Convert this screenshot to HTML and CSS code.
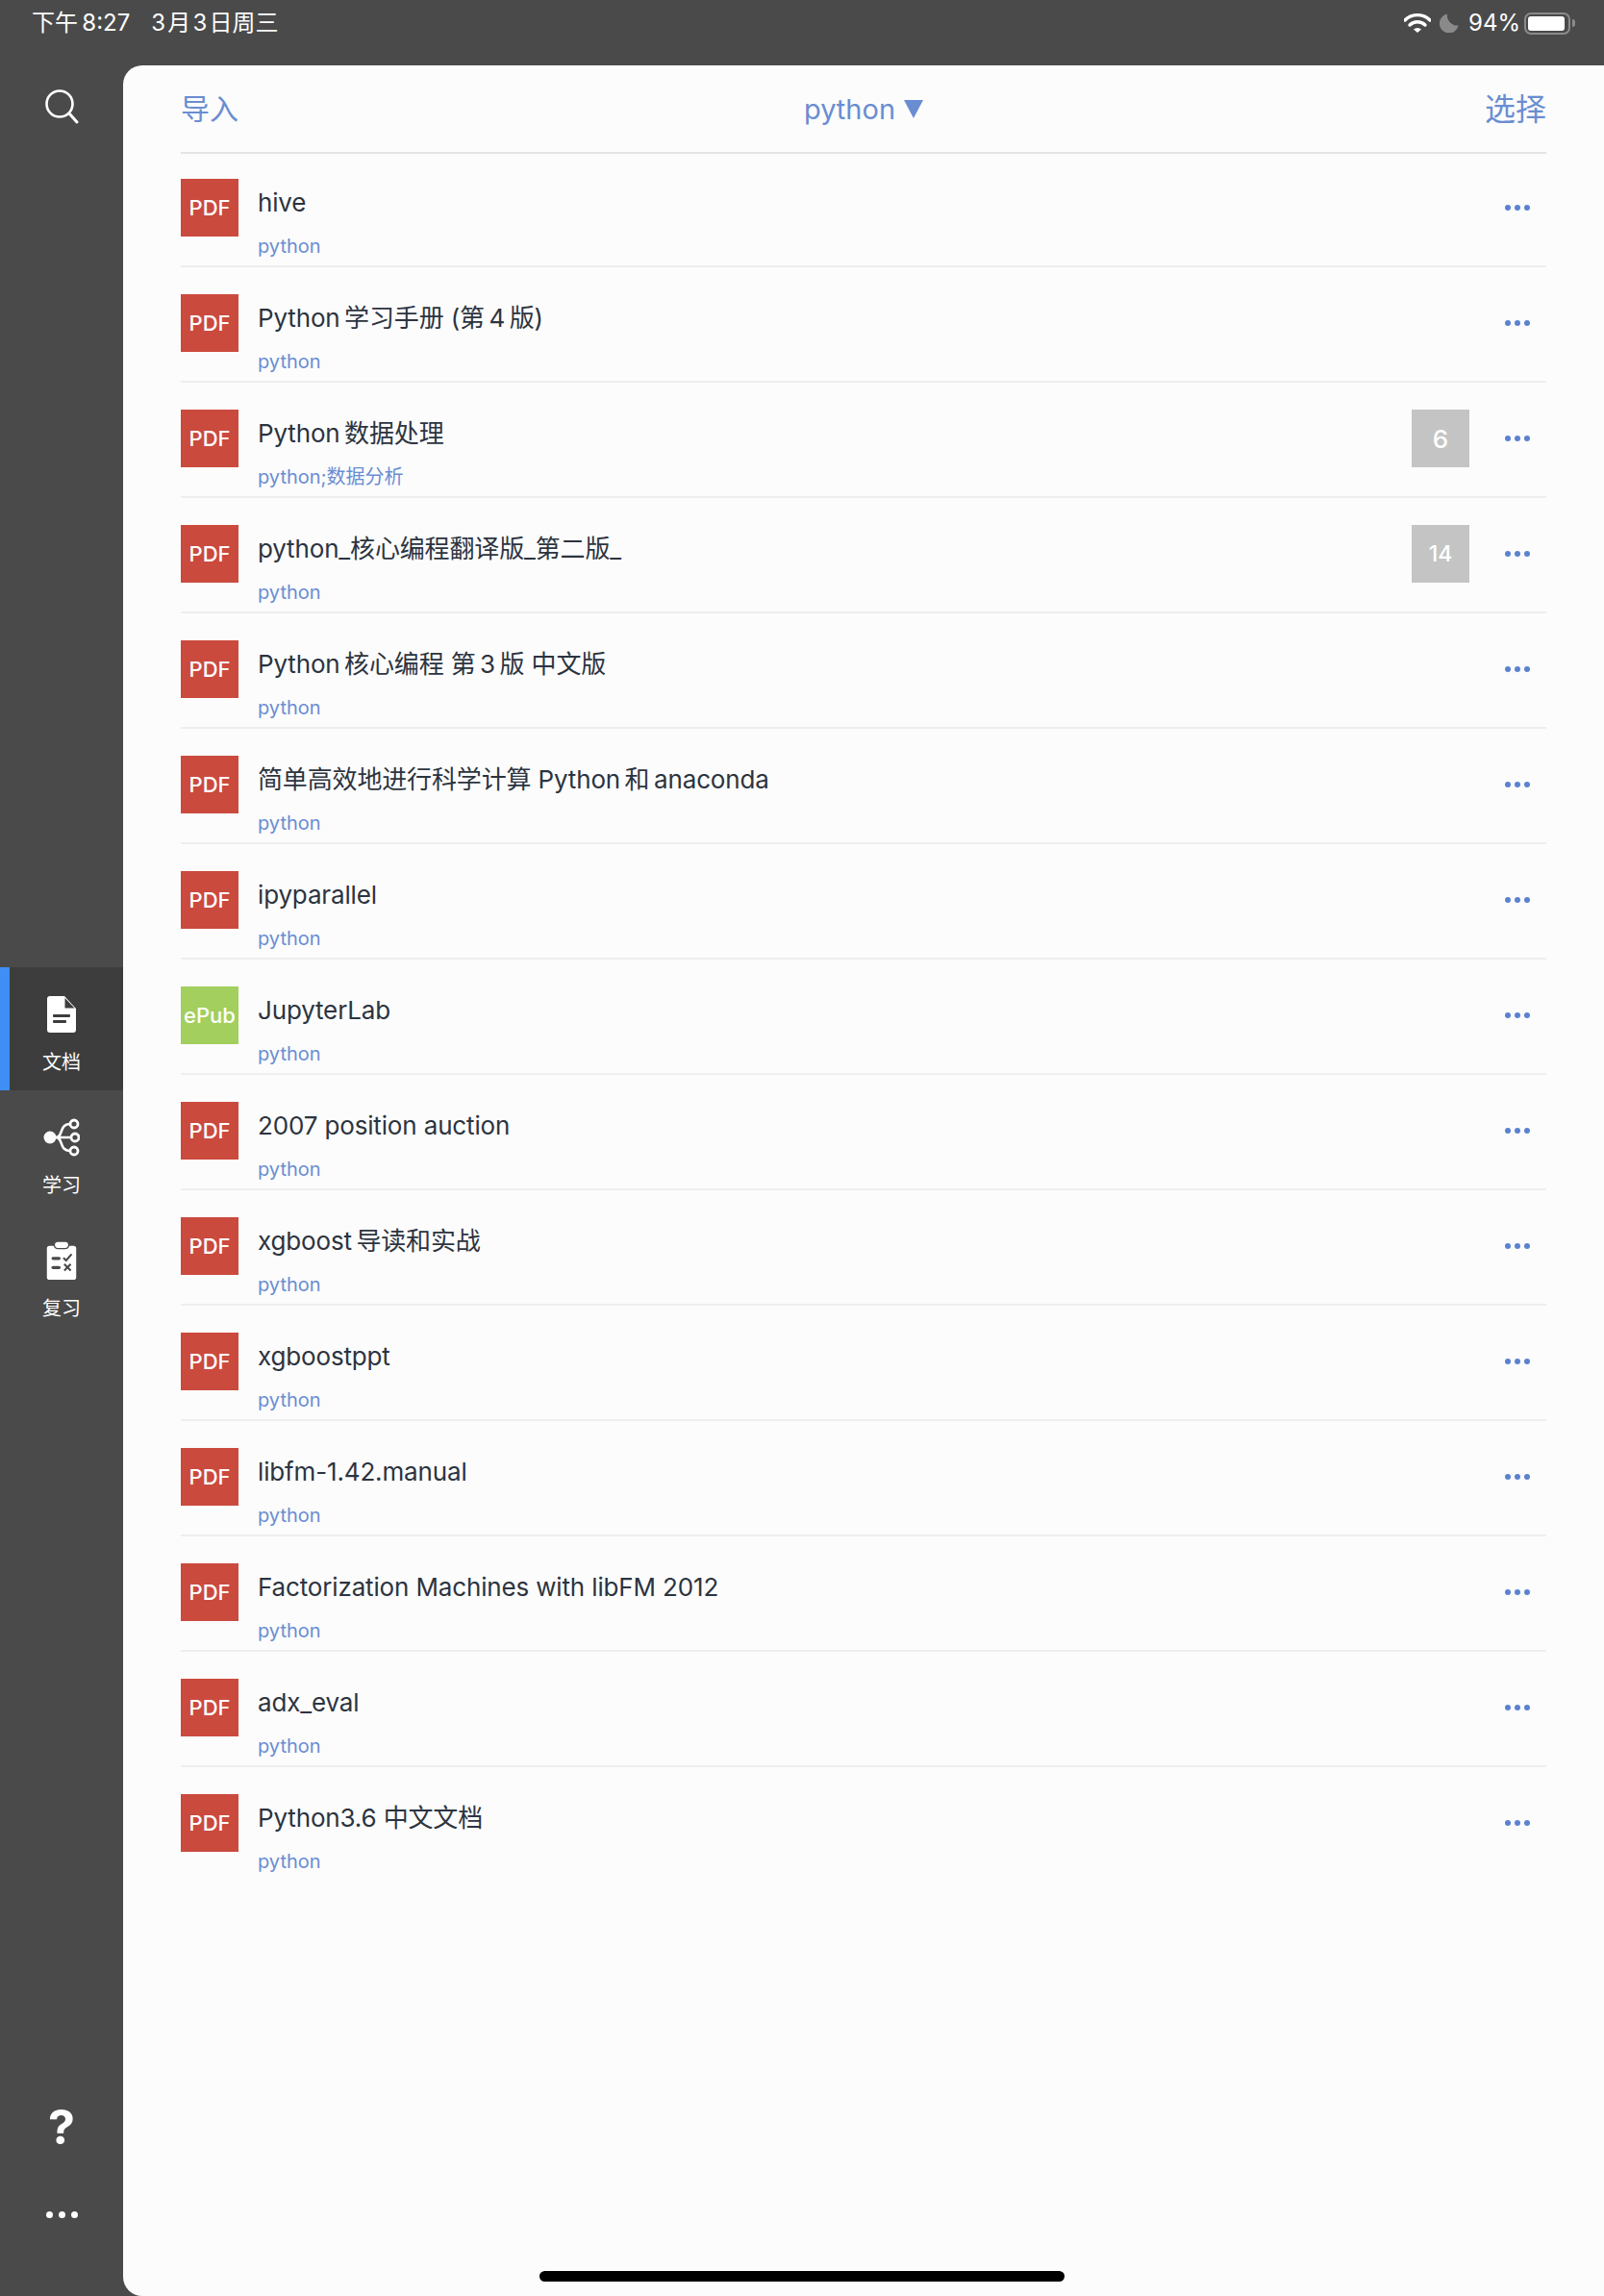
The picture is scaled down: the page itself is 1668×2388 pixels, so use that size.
FILE: index.html
```html
<!DOCTYPE html>
<html>
<head>
    <title>文档</title>
    <link rel="stylesheet" href="styles.css">
</head>
<body>
    <div id="app">
        <div class="status-bar">
            <div class="status-time">
                <span>下午&thinsp;8:27</span>
                <span>3&hairsp;月&hairsp;3&hairsp;日周三</span>
            </div>
            <div class="status-icons">
                <svg class="icon-wifi" width="28" height="20" viewBox="0 0 28 20">
                    <path d="M1 7 A18.5 18.5 0 0 1 27 7" fill="none" stroke="#fff" stroke-width="3.4" stroke-linecap="round"/>
                    <path d="M6 12 A11.5 11.5 0 0 1 22 12" fill="none" stroke="#fff" stroke-width="3.4" stroke-linecap="round"/>
                    <path d="M10 16.5 A6 6 0 0 1 18 16.5 L14 20 Z" fill="#fff"/>
                </svg>
                <svg class="icon-moon" width="20" height="20" viewBox="0 0 20 20">
                    <path d="M8 0.5 A10 10 0 1 0 19.6 12.5 A10.5 10.5 0 0 1 8 0.5 Z" fill="#8a8a8a"/>
                </svg>
                <span class="battery-text">94%</span>
                <div class="battery">
                    <div class="battery-fill"></div>
                </div>
                <div class="battery-nub"></div>
            </div>
        </div>

        <div class="sidebar">
            <button class="side-search">
                <svg width="36" height="36" viewBox="0 0 36 36">
                    <circle cx="16" cy="15" r="13.5" fill="none" stroke="#fff" stroke-width="2.6"/>
                    <path d="M26 25 L34 34" stroke="#fff" stroke-width="3" stroke-linecap="round"/>
                </svg>
            </button>

            <div class="side-nav">
                <div class="side-item active">
                    <svg width="30" height="38" viewBox="0 0 30 38">
                        <path d="M3 0 H18 L30 13 V35 A3 3 0 0 1 27 38 H3 A3 3 0 0 1 0 35 V3 A3 3 0 0 1 3 0 Z" fill="#fff"/>
                        <path d="M18.5 2 V12.5 H28.5 Z" fill="#3d3d3d"/>
                        <rect x="6" y="19" width="18" height="3" rx="1" fill="#3d3d3d"/>
                        <rect x="6" y="25" width="14" height="3" rx="1" fill="#3d3d3d"/>
                    </svg>
                    <span>文档</span>
                </div>
                <div class="side-item">
                    <svg width="38" height="40" viewBox="0 0 38 40">
                        <circle cx="7" cy="20" r="6.5" fill="#fff"/>
                        <path d="M7 20 H29 M13 20 C21 20 16 6 28 6 M13 20 C21 20 16 34 28 34" fill="none" stroke="#fff" stroke-width="2.6"/>
                        <circle cx="32" cy="6" r="4" fill="#4a4a4a" stroke="#fff" stroke-width="2.8"/>
                        <circle cx="33" cy="20" r="4" fill="#4a4a4a" stroke="#fff" stroke-width="2.8"/>
                        <circle cx="32" cy="34" r="4" fill="#4a4a4a" stroke="#fff" stroke-width="2.8"/>
                    </svg>
                    <span>学习</span>
                </div>
                <div class="side-item">
                    <svg width="32" height="42" viewBox="0 0 32 42">
                        <path d="M3 5 H29 A3 3 0 0 1 32 8 V39 A3 3 0 0 1 29 42 H3 A3 3 0 0 1 0 39 V8 A3 3 0 0 1 3 5 Z" fill="#fff"/>
                        <rect x="8" y="0" width="16" height="8" rx="4" fill="#fff" stroke="#4a4a4a" stroke-width="1.5"/>
                        <rect x="5" y="17" width="10" height="3.4" rx="1.7" fill="#4a4a4a"/>
                        <rect x="5" y="27" width="10" height="3.4" rx="1.7" fill="#4a4a4a"/>
                        <path d="M18 18 L21 21 L27 14 M19 25 L26 32 M26 25 L19 32" fill="none" stroke="#4a4a4a" stroke-width="2.2"/>
                    </svg>
                    <span>复习</span>
                </div>
            </div>

            <div class="side-bottom">
                <div class="side-help">?</div>
                <div class="side-more"><i></i><i></i><i></i></div>
            </div>
        </div>

        <div class="content">
            <div class="header">
                <span class="header-left">导入</span>
                <div class="header-title">python <span class="triangle"></span></div>
                <span class="header-right">选择</span>
            </div>

            <div class="doc-list">
                <div class="doc-row">
                    <div class="doc-type pdf">PDF</div>
                    <div class="doc-text"><div class="doc-title">hive</div><div class="doc-tag">python</div></div>
                    <div class="doc-more"><i></i><i></i><i></i></div>
                </div>
                <div class="doc-row">
                    <div class="doc-type pdf">PDF</div>
                    <div class="doc-text"><div class="doc-title">Python&thinsp;学习手册 (第&thinsp;4&thinsp;版)</div><div class="doc-tag">python</div></div>
                    <div class="doc-more"><i></i><i></i><i></i></div>
                </div>
                <div class="doc-row">
                    <div class="doc-type pdf">PDF</div>
                    <div class="doc-text"><div class="doc-title">Python&thinsp;数据处理</div><div class="doc-tag">python;数据分析</div></div>
                    <div class="doc-count">6</div>
                    <div class="doc-more"><i></i><i></i><i></i></div>
                </div>
                <div class="doc-row">
                    <div class="doc-type pdf">PDF</div>
                    <div class="doc-text"><div class="doc-title">python_核心编程翻译版_第二版_</div><div class="doc-tag">python</div></div>
                    <div class="doc-count small">14</div>
                    <div class="doc-more"><i></i><i></i><i></i></div>
                </div>
                <div class="doc-row">
                    <div class="doc-type pdf">PDF</div>
                    <div class="doc-text"><div class="doc-title">Python&thinsp;核心编程 第&thinsp;3&thinsp;版 中文版</div><div class="doc-tag">python</div></div>
                    <div class="doc-more"><i></i><i></i><i></i></div>
                </div>
                <div class="doc-row">
                    <div class="doc-type pdf">PDF</div>
                    <div class="doc-text"><div class="doc-title">简单高效地进行科学计算 Python&thinsp;和&thinsp;anaconda</div><div class="doc-tag">python</div></div>
                    <div class="doc-more"><i></i><i></i><i></i></div>
                </div>
                <div class="doc-row">
                    <div class="doc-type pdf">PDF</div>
                    <div class="doc-text"><div class="doc-title">ipyparallel</div><div class="doc-tag">python</div></div>
                    <div class="doc-more"><i></i><i></i><i></i></div>
                </div>
                <div class="doc-row">
                    <div class="doc-type epub">ePub</div>
                    <div class="doc-text"><div class="doc-title">JupyterLab</div><div class="doc-tag">python</div></div>
                    <div class="doc-more"><i></i><i></i><i></i></div>
                </div>
                <div class="doc-row">
                    <div class="doc-type pdf">PDF</div>
                    <div class="doc-text"><div class="doc-title">2007 position auction</div><div class="doc-tag">python</div></div>
                    <div class="doc-more"><i></i><i></i><i></i></div>
                </div>
                <div class="doc-row">
                    <div class="doc-type pdf">PDF</div>
                    <div class="doc-text"><div class="doc-title">xgboost&thinsp;导读和实战</div><div class="doc-tag">python</div></div>
                    <div class="doc-more"><i></i><i></i><i></i></div>
                </div>
                <div class="doc-row">
                    <div class="doc-type pdf">PDF</div>
                    <div class="doc-text"><div class="doc-title">xgboostppt</div><div class="doc-tag">python</div></div>
                    <div class="doc-more"><i></i><i></i><i></i></div>
                </div>
                <div class="doc-row">
                    <div class="doc-type pdf">PDF</div>
                    <div class="doc-text"><div class="doc-title">libfm-1.42.manual</div><div class="doc-tag">python</div></div>
                    <div class="doc-more"><i></i><i></i><i></i></div>
                </div>
                <div class="doc-row">
                    <div class="doc-type pdf">PDF</div>
                    <div class="doc-text"><div class="doc-title">Factorization Machines with libFM 2012</div><div class="doc-tag">python</div></div>
                    <div class="doc-more"><i></i><i></i><i></i></div>
                </div>
                <div class="doc-row">
                    <div class="doc-type pdf">PDF</div>
                    <div class="doc-text"><div class="doc-title">adx_eval</div><div class="doc-tag">python</div></div>
                    <div class="doc-more"><i></i><i></i><i></i></div>
                </div>
                <div class="doc-row">
                    <div class="doc-type pdf">PDF</div>
                    <div class="doc-text"><div class="doc-title">Python3.6 中文文档</div><div class="doc-tag">python</div></div>
                    <div class="doc-more"><i></i><i></i><i></i></div>
                </div>
            </div>
        </div>

        <div class="home-bar"></div>
    </div>
</body>
</html>
```

FILE: styles.css
```css
body {
    margin: 0;
    padding: 0;
    background-color: #4a4a4a;
    font-family: Inter, "Noto Sans CJK SC", sans-serif;
}

#app {
    position: relative;
    width: 1668px;
    height: 2388px;
    overflow: hidden;
    display: grid;
    grid-template-columns: 128px 1fr;
    grid-template-rows: 68px 1fr;
}

/* status bar */
.status-bar {
    grid-column: 1 / 3;
    display: flex;
    justify-content: space-between;
    align-items: flex-start;
    padding: 9px 30px 0 33px;
    color: #fff;
    font-size: 24px;
    line-height: 30px;
}

.status-time {
    display: flex;
    gap: 22px;
}

.status-icons {
    display: flex;
    align-items: center;
    height: 30px;
}

.icon-wifi {
    margin-right: 9px;
    margin-left: 2px;
}

.icon-moon {
    margin-right: 10px;
}

.battery-text {
    margin-right: 4px;
}

.battery {
    width: 48px;
    height: 23px;
    box-sizing: border-box;
    border: 2px solid #8a8a8a;
    border-radius: 7px;
    padding: 2px;
}

.battery-fill {
    width: 38px;
    height: 100%;
    background-color: #fff;
    border-radius: 3px;
}

.battery-nub {
    width: 3px;
    height: 8px;
    margin-left: 2px;
    background-color: #8a8a8a;
    border-radius: 0 3px 3px 0;
}

/* sidebar */
.sidebar {
    display: flex;
    flex-direction: column;
    align-items: stretch;
}

.side-search {
    display: block;
    align-self: center;
    width: 36px;
    height: 36px;
    margin-top: 25px;
    padding: 0;
    background: none;
    border: none;
}

.side-nav {
    margin-top: 877px;
}

.side-item {
    box-sizing: border-box;
    height: 128px;
    padding-top: 29px;
    display: flex;
    flex-direction: column;
    align-items: center;
    color: #fff;
    font-size: 20px;
}

.side-item svg {
    height: 40px;
}

.side-item span {
    margin-top: 16px;
    line-height: 28px;
}

.side-item.active {
    background-color: #3d3d3d;
    box-shadow: inset 10px 0 0 #3f8ef5;
}

.side-bottom {
    margin-top: 792px;
    display: flex;
    flex-direction: column;
    align-items: center;
}

.side-help {
    color: #fff;
    font-size: 50px;
    font-weight: 700;
    line-height: 60px;
}

.side-more {
    margin-top: 58px;
    display: flex;
    gap: 6px;
}

.side-more i {
    width: 7px;
    height: 7px;
    background-color: #fff;
    border-radius: 50%;
}

/* main list */
.content {
    background-color: #fcfcfc;
    border-radius: 20px 0 0 20px;
    padding: 0 60px;
}

.header {
    box-sizing: border-box;
    height: 92px;
    margin-bottom: -2px;
    padding-bottom: 4px;
    display: grid;
    grid-template-columns: 1fr auto 1fr;
    align-items: center;
    border-bottom: 2px solid #e4e4e4;
    color: #6a8dd2;
    font-size: 30px;
}

.header-title {
    display: flex;
    align-items: center;
    gap: 9px;
    padding-top: 4px;
    font-size: 29px;
}

.triangle {
    width: 0;
    height: 0;
    border-left: 10px solid transparent;
    border-right: 10px solid transparent;
    border-top: 19px solid #6a8dd2;
}

.header-right {
    text-align: right;
    font-size: 32px;
}

.doc-row {
    box-sizing: border-box;
    height: 120px;
    padding-top: 28px;
    display: flex;
    align-items: flex-start;
    border-bottom: 2px solid #eeeeee;
}

.doc-row:last-child {
    border-bottom: none;
}

.doc-type {
    width: 60px;
    height: 60px;
    display: flex;
    align-items: center;
    justify-content: center;
    color: #fff;
    font-size: 22px;
    font-weight: 500;
}

.doc-type.pdf {
    background-color: #cb4a3e;
}

.doc-type.epub {
    background-color: #a2cf5e;
}

.doc-text {
    flex: 1;
    margin-left: 20px;
    padding-top: 8px;
}

.doc-title {
    color: #2c3440;
    font-size: 26px;
    line-height: 34px;
    letter-spacing: -0.15px;
}

.doc-tag {
    margin-top: 14px;
    color: #6a8dd2;
    font-size: 20px;
    line-height: 28px;
}

.doc-count {
    width: 60px;
    height: 60px;
    margin-right: 20px;
    display: flex;
    align-items: center;
    justify-content: center;
    background-color: #c4c4c4;
    color: #fff;
    font-size: 26px;
    font-weight: 500;
}

.doc-count.small {
    font-size: 23px;
}

.doc-more {
    width: 60px;
    height: 60px;
    display: flex;
    align-items: center;
    justify-content: center;
    gap: 4px;
}

.doc-more i {
    width: 6px;
    height: 6px;
    background-color: #5b82cf;
    border-radius: 50%;
}

.home-bar {
    position: absolute;
    left: 561px;
    top: 2362px;
    width: 546px;
    height: 11px;
    background-color: #000;
    border-radius: 6px;
}
```
